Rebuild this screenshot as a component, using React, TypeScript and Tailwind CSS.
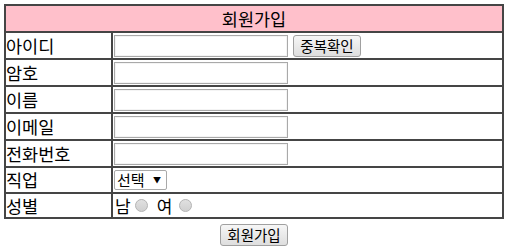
import React from "react";

const font = { fontFamily: '"Noto Sans CJK KR", "Noto Sans", sans-serif' };

function Label({ children }: { children: React.ReactNode }) {
  return (
    <td className="border-2 border-[#454545] pl-0 pr-1 text-[17.5px] leading-[20px] text-black align-middle w-[107px]">
      {children}
    </td>
  );
}

function Input({ w = "w-[174px]" }: { w?: string }) {
  return (
    <input
      type="text"
      className={`${w} h-[22px] border border-[#a9a9a9] shadow-[inset_0_0_0_1px_#f4f4f4] bg-white outline-none`}
    />
  );
}

export default function App() {
  return (
    <div className="bg-white w-[511px] h-[250px] pt-[4px] pl-[4px]" style={font}>
      <table className="border-collapse w-[500px] border-2 border-[#454545]">
        <tbody>
          <tr className="h-[27px]">
            <td colSpan={2} className="border-2 border-[#454545] bg-[#ffc0cb] text-center text-[17.5px] leading-[20px] text-black">
              회원가입
            </td>
          </tr>
          <tr className="h-[27px]">
            <Label>아이디</Label>
            <td className="border-2 border-[#454545] pl-[1px]">
              <div className="flex items-center gap-[5px]">
                <Input />
                <button className="h-[22px] w-[68px] text-[14.5px] leading-[18px] text-black border border-[#a0a0a0] rounded-[3px] bg-gradient-to-b from-[#f6f6f6] to-[#dedede]">
                  중복확인
                </button>
              </div>
            </td>
          </tr>
          <tr className="h-[27px]">
            <Label>암호</Label>
            <td className="border-2 border-[#454545] pl-[1px]">
              <div className="flex items-center"><Input /></div>
            </td>
          </tr>
          <tr className="h-[27px]">
            <Label>이름</Label>
            <td className="border-2 border-[#454545] pl-[1px]">
              <div className="flex items-center"><Input /></div>
            </td>
          </tr>
          <tr className="h-[27px]">
            <Label>이메일</Label>
            <td className="border-2 border-[#454545] pl-[1px]">
              <div className="flex items-center"><Input /></div>
            </td>
          </tr>
          <tr className="h-[27px]">
            <Label>전화번호</Label>
            <td className="border-2 border-[#454545] pl-[1px]">
              <div className="flex items-center"><Input /></div>
            </td>
          </tr>
          <tr className="h-[26px]">
            <Label>직업</Label>
            <td className="border-2 border-[#454545] pl-[1px]">
              <div className="flex items-center">
                <div className="flex items-center justify-between w-[53px] h-[20px] border border-[#a9a9a9] rounded-[2px] bg-white pl-[2px] pr-[5px] text-[15px] leading-[18px] text-black">
                  <span>선택</span>
                  <span className="text-[8px]">▼</span>
                </div>
              </div>
            </td>
          </tr>
          <tr className="h-[25px]">
            <Label>성별</Label>
            <td className="border-2 border-[#454545] pl-[2px]">
              <div className="flex items-center text-[17px] leading-[20px] text-black">
                <span>남</span>
                <span className="ml-[4px] w-[13px] h-[13px] rounded-full border border-[#b5b5b5] bg-gradient-to-b from-[#e0e0e0] to-[#d0d0d0]" />
                <span className="ml-[9px]">여</span>
                <span className="ml-[7px] w-[13px] h-[13px] rounded-full border border-[#b5b5b5] bg-gradient-to-b from-[#e0e0e0] to-[#d0d0d0]" />
              </div>
            </td>
          </tr>
        </tbody>
      </table>
      <div className="flex justify-center w-[500px] mt-[5px]">
        <button className="h-[22px] w-[68px] text-[14.5px] leading-[18px] text-black border border-[#a0a0a0] rounded-[3px] bg-gradient-to-b from-[#f6f6f6] to-[#dedede]">
          회원가입
        </button>
      </div>
    </div>
  );
}
